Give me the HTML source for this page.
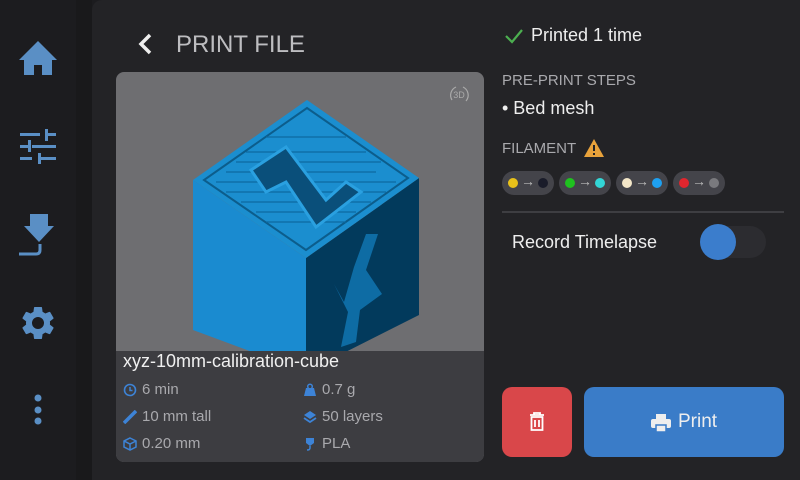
<!DOCTYPE html>
<html><head><meta charset="utf-8"><style>
*{margin:0;padding:0;box-sizing:border-box}
body{width:800px;height:480px;background:#1c1c1f;font-family:"Liberation Sans","DejaVu Sans",sans-serif;position:relative;overflow:hidden;color:#e6e6e6}
.side{position:absolute;left:0;top:0;width:76px;height:480px;background:#1c1c1f}
.gap{position:absolute;left:76px;top:0;width:16px;height:480px;background:#19191b}
.panel{position:absolute;left:92px;top:0;width:708px;height:480px;background:#232326;border-radius:10px 0 0 0}
.abs{position:absolute}
.ico{position:absolute;left:18px}
.card{position:absolute;left:116px;top:72px;width:368px;height:390px;background:#6e6e71;border-radius:8px;overflow:hidden}
.info{position:absolute;left:0;top:279px;width:368px;height:111px;background:#3d3d41}
.meta{position:absolute;font-size:15px;color:#a9a9ad}
.chip{position:absolute;top:171px;height:24px;width:52px;border-radius:12px;background:#44444a}
.dot{position:absolute;top:7px;width:10px;height:10px;border-radius:50%}
.arr{position:absolute;left:19px;top:2px;font-size:14px;color:#bbb}
</style></head><body>
<div class="side"></div><div class="gap"></div>
<svg class="ico" style="top:40px" width="40" height="36" viewBox="0 0 40 36"><path d="M20 1 L39 20 L34 20 L34 35 L24 35 L24 25 L16 25 L16 35 L6 35 L6 20 L1 20 Z" fill="#5a8fc5"/></svg>
<svg class="ico" style="top:128px" width="40" height="36" viewBox="0 0 40 36" fill="#5a8fc5"><rect x="2" y="5" width="20" height="3"/><rect x="27" y="5" width="11" height="3"/><rect x="27" y="1" width="3" height="12"/><rect x="2" y="17" width="8" height="3"/><rect x="14" y="17" width="24" height="3"/><rect x="10" y="12" width="3" height="12"/><rect x="2" y="29" width="12" height="3"/><rect x="20" y="29" width="18" height="3"/><rect x="20" y="25" width="3" height="11"/></svg>
<svg class="ico" style="top:214px" width="40" height="44" viewBox="0 0 40 44" fill="#5a8fc5"><path d="M12 0 H30 V12 H36 L21 28 L6 12 H12 Z"/><path d="M1 40 H18 Q22 40 22 36 V30" stroke="#5a8fc5" stroke-width="3" fill="none"/></svg>
<svg class="ico" style="top:303px" width="40" height="40" viewBox="0 0 24 24"><path fill="#5a8fc5" d="M19.14 12.94c.04-.3.06-.61.06-.94s-.02-.64-.07-.94l2.03-1.58a.49.49 0 0 0 .12-.61l-1.92-3.32a.49.49 0 0 0-.59-.22l-2.39.96c-.5-.38-1.03-.7-1.62-.94L14.4 2.81a.48.48 0 0 0-.48-.41h-3.84a.48.48 0 0 0-.47.41l-.36 2.54c-.59.24-1.13.57-1.62.94l-2.39-.96a.48.48 0 0 0-.59.22L2.74 8.87a.47.47 0 0 0 .12.61l2.03 1.58c-.05.3-.09.63-.09.94s.02.64.07.94l-2.03 1.58a.49.49 0 0 0-.12.61l1.92 3.32c.12.22.37.29.59.22l2.39-.96c.5.38 1.03.7 1.62.94l.36 2.54c.05.24.24.41.48.41h3.84c.24 0 .44-.17.47-.41l.36-2.54c.59-.24 1.13-.56 1.62-.94l2.39.96c.22.08.47 0 .59-.22l1.92-3.32a.47.47 0 0 0-.12-.61l-2.01-1.58zM12 15.6A3.6 3.6 0 1 1 12 8.4a3.6 3.6 0 0 1 0 7.2z"/></svg>
<svg class="ico" style="top:393px" width="40" height="36"><circle cx="20" cy="5" r="3.5" fill="#5a8fc5"/><circle cx="20" cy="17" r="3.5" fill="#5a8fc5"/><circle cx="20" cy="28" r="3.5" fill="#5a8fc5"/></svg>
<div class="panel"></div>
<svg class="abs" style="left:136px;top:32px" width="20" height="24"><path d="M14 3 L5 12 L14 21" stroke="#eee" stroke-width="3.5" fill="none"/></svg>
<div class="abs" style="left:176px;top:31px;font-size:24px;color:#bdbdc0">PRINT FILE</div>
<div class="card">
<svg class="abs" style="left:330px;top:10px" width="26" height="26" viewBox="0 0 26 26"><text x="13" y="16" font-size="9" fill="#aaa" text-anchor="middle" font-family="Liberation Sans">3D</text><path d="M6 18 A9 9 0 0 1 10 5 M17 5 A9 9 0 0 1 20 19" stroke="#aaa" stroke-width="1.2" fill="none"/></svg>
<svg class="abs" style="left:0;top:0" width="368" height="290">
<polygon points="77,108 190,186 190,300 77,258" fill="#1a8bd0"/>
<polygon points="190,186 303,106 303,243 190,300" fill="#023a5c"/>
<polygon points="191,28 303,106 190,186 77,108" fill="#1b8ecf"/>
<polygon points="191,36 292,106 190,178 88,108" fill="none" stroke="#0c5d8c" stroke-width="2"/>
<g stroke="#0d6aa0" stroke-width="1.3">
<line x1="110" y1="100" x2="260" y2="100"/><line x1="100" y1="110" x2="280" y2="110"/><line x1="110" y1="120" x2="270" y2="120"/><line x1="125" y1="130" x2="255" y2="130"/><line x1="140" y1="140" x2="240" y2="140"/><line x1="150" y1="150" x2="230" y2="150"/><line x1="130" y1="80" x2="250" y2="80"/><line x1="150" y1="65" x2="230" y2="65"/><line x1="120" y1="90" x2="265" y2="90"/></g>
<path d="M135 98 L170 75 L210 128 L230 110 L245 120 L200 155 L170 110 L150 120 Z" fill="#0a4f7a" stroke="#2aa0e0" stroke-width="3"/>
<path d="M228 230 L238 195 L250 162 L262 162 L250 198 L266 222 L244 238 L240 270 L225 275 L232 240 L218 212 Z" fill="#1179b6" opacity=".8"/>
</svg>
<div class="info">
<div class="abs" style="left:7px;top:0;font-size:18px;color:#f0f0f0">xyz-10mm-calibration-cube</div>
<div class="meta" style="left:26px;top:30px">6 min</div>
<div class="meta" style="left:26px;top:57px">10 mm tall</div>
<div class="meta" style="left:26px;top:84px">0.20 mm</div>
<div class="meta" style="left:206px;top:30px">0.7 g</div>
<div class="meta" style="left:206px;top:57px">50 layers</div>
<div class="meta" style="left:206px;top:84px">PLA</div>
<svg class="abs" style="left:7px;top:32px" width="14" height="14"><circle cx="7" cy="7" r="5.5" stroke="#3d83d6" stroke-width="1.6" fill="none"/><path d="M7 4V7.5H9.5" stroke="#3d83d6" stroke-width="1.5" fill="none"/></svg>
<svg class="abs" style="left:7px;top:59px" width="14" height="14"><path d="M1 13 L13 1" stroke="#3d83d6" stroke-width="3.5"/></svg>
<svg class="abs" style="left:7px;top:86px" width="14" height="14"><path d="M7 1 L13 4 V10 L7 13 L1 10 V4 Z M1 4 L7 7 L13 4 M7 7 V13" stroke="#3d83d6" stroke-width="1.5" fill="none"/></svg>
<svg class="abs" style="left:187px;top:32px" width="14" height="14"><path d="M3 5 H11 L13 13 H1 Z" fill="#3d83d6"/><circle cx="7" cy="3.5" r="2.3" stroke="#3d83d6" stroke-width="1.5" fill="none"/></svg>
<svg class="abs" style="left:187px;top:59px" width="14" height="14"><path d="M7 1 L13 5 L7 9 L1 5 Z" fill="#3d83d6"/><path d="M1 8 L7 12 L13 8" stroke="#3d83d6" stroke-width="1.8" fill="none"/></svg>
<svg class="abs" style="left:187px;top:86px" width="14" height="14"><path d="M3 1 H11 V6 L7 9 L3 6 Z" fill="#3d83d6"/><path d="M7 9 V11 Q7 13 4 13" stroke="#3d83d6" stroke-width="1.5" fill="none"/></svg>
</div></div>
<svg class="abs" style="left:504px;top:27px" width="20" height="18"><path d="M2 9 L8 15 L18 3" stroke="#4caf50" stroke-width="2.2" fill="none"/></svg>
<div class="abs" style="left:531px;top:25px;font-size:18px;color:#eee">Printed 1 time</div>
<div class="abs" style="left:502px;top:72px;font-size:15px;color:#a9a9ad">PRE-PRINT STEPS</div>
<div class="abs" style="left:502px;top:98px;font-size:18px;color:#eee">• Bed mesh</div>
<div class="abs" style="left:502px;top:140px;font-size:15px;color:#a9a9ad">FILAMENT</div>
<svg class="abs" style="left:583px;top:138px" width="22" height="20"><path d="M11 1 L21 19 H1 Z" fill="#e8a23b"/><rect x="10" y="7" width="2" height="6" fill="#232326"/><rect x="10" y="15" width="2" height="2" fill="#232326"/></svg>
<div class="chip" style="left:502px"><div class="dot" style="left:6px;background:#e8c11a"></div><div class="arr">→</div><div class="dot" style="left:36px;background:#1a1c2a"></div></div>
<div class="chip" style="left:559px"><div class="dot" style="left:6px;background:#1fc21f"></div><div class="arr">→</div><div class="dot" style="left:36px;background:#33d6d6"></div></div>
<div class="chip" style="left:616px"><div class="dot" style="left:6px;background:#f3e6c8"></div><div class="arr">→</div><div class="dot" style="left:36px;background:#1ea0f0"></div></div>
<div class="chip" style="left:673px"><div class="dot" style="left:6px;background:#e0262e"></div><div class="arr">→</div><div class="dot" style="left:36px;background:#7a7a7e"></div></div>
<div class="abs" style="left:502px;top:211px;width:282px;height:2px;background:#3e3e42"></div>
<div class="abs" style="left:512px;top:232px;font-size:18px;color:#eee">Record Timelapse</div>
<div class="abs" style="left:700px;top:226px;width:66px;height:32px;border-radius:16px;background:#2c2c30"></div>
<div class="abs" style="left:700px;top:224px;width:36px;height:36px;border-radius:50%;background:#3b7dcc"></div>
<div class="abs" style="left:502px;top:387px;width:70px;height:70px;border-radius:10px;background:#d9474a"></div>
<svg class="abs" style="left:528px;top:412px" width="18" height="20"><path d="M2 3 H16 M6 3 V1 H12 V3 M3.5 5 H14.5 V18 H3.5 Z M7 8 V15 M11 8 V15" stroke="#fff" stroke-width="1.8" fill="none"/></svg>
<div class="abs" style="left:584px;top:387px;width:200px;height:70px;border-radius:10px;background:#3a7cc8"></div>
<svg class="abs" style="left:650px;top:413px" width="22" height="20"><rect x="6" y="1" width="10" height="5" fill="#eee"/><rect x="1" y="6" width="20" height="9" rx="2" fill="#eee"/><rect x="6" y="12" width="10" height="7" fill="#eee" stroke="#3a7cc8" stroke-width="1.5"/></svg>
<div class="abs" style="left:678px;top:411px;font-size:19px;color:#eee">Print</div>
</body></html>
